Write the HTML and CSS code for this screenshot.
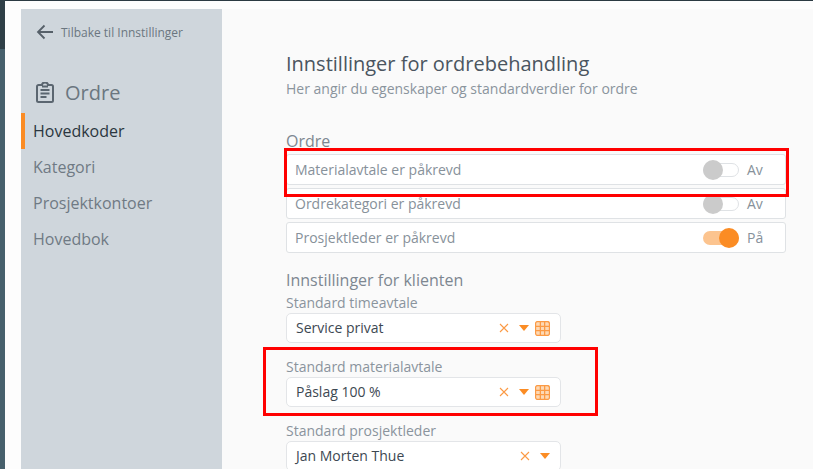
FILE: index.html
```html
<!DOCTYPE html>
<html lang="nb">
<head>
<meta charset="UTF-8">
<meta name="viewport" content="width=device-width, initial-scale=1.0">
<title>Innstillinger for ordrebehandling</title>
<link rel="stylesheet" href="styles.css">
</head>
<body>
  <div class="rail"><div class="rail-top"></div></div>
  <div class="page">
    <nav class="sidebar">
      <a class="back">
        <svg class="back-icon" width="18" height="16" viewBox="0 0 18 16"><path d="M17 8H2M8.500 1.500 2 8l6.500 6.500" fill="none" stroke="#566069" stroke-width="1.800"/></svg>
        Tilbake til Innstillinger
      </a>
      <div class="side-title">
        <svg width="18" height="21" viewBox="0 0 18 21"><path d="M2.500 3H6a3 2.500 0 0 1 6 0h3.500A1.500 1.500 0 0 1 17 4.500v14a1.500 1.500 0 0 1-1.500 1.500h-13A1.500 1.500 0 0 1 1 18.500v-14A1.500 1.500 0 0 1 2.500 3Z" fill="none" stroke="#5b6670" stroke-width="2"/><path d="M4.500 8h9M4.500 11.500h9M4.500 15h6M6 4.500h6" stroke="#5b6670" stroke-width="1.800"/></svg>
        <span>Ordre</span>
      </div>
      <ul class="side-menu">
        <li class="active">Hovedkoder</li>
        <li>Kategori</li>
        <li>Prosjektkontoer</li>
        <li>Hovedbok</li>
      </ul>
    </nav>
    <main class="content">
      <h1>Innstillinger for ordrebehandling</h1>
      <p class="lead">Her angir du egenskaper og standardverdier for ordre</p>

      <h2 class="section-order">Ordre</h2>
      <div class="rows">
        <div class="row"><span class="row-label">Materialavtale er påkrevd</span><span class="switch"><i></i></span><span class="state">Av</span></div>
        <div class="row"><span class="row-label">Ordrekategori er påkrevd</span><span class="switch"><i></i></span><span class="state">Av</span></div>
        <div class="row"><span class="row-label">Prosjektleder er påkrevd</span><span class="switch on"><i></i></span><span class="state">På</span></div>
      </div>

      <h2 class="section-client">Innstillinger for klienten</h2>
      <div class="field">
        <label>Standard timeavtale</label>
        <div class="select">
          <span class="value">Service privat</span>
          <svg class="clear" viewBox="0 0 10 10"><path d="M1 1l8 8M9 1l-8 8"/></svg>
          <span class="caret"></span>
          <svg class="grid" viewBox="0 0 14 14"><rect x="0.500" y="0.500" width="13" height="13" rx="2"/><path d="M0 5h14M0 9h14M5 0v14M9 0v14"/></svg>
        </div>
      </div>
      <div class="field">
        <label>Standard materialavtale</label>
        <div class="select">
          <span class="value">Påslag 100 %</span>
          <svg class="clear" viewBox="0 0 10 10"><path d="M1 1l8 8M9 1l-8 8"/></svg>
          <span class="caret"></span>
          <svg class="grid" viewBox="0 0 14 14"><rect x="0.500" y="0.500" width="13" height="13" rx="2"/><path d="M0 5h14M0 9h14M5 0v14M9 0v14"/></svg>
        </div>
      </div>
      <div class="field">
        <label>Standard prosjektleder</label>
        <div class="select">
          <span class="value">Jan Morten Thue</span>
          <svg class="clear" viewBox="0 0 10 10"><path d="M1 1l8 8M9 1l-8 8"/></svg>
          <span class="caret"></span>
        </div>
      </div>
    </main>
  </div>
  <div class="mark mark-row"></div>
  <div class="mark mark-field"></div>
</body>
</html>
```

FILE: styles.css
```css
html, body {
  height: 100%;
}
body {
  display: flex;
  height: 469px;
  margin: 0;
  overflow: hidden;
  font-family: "Open Sans", sans-serif;
  background-color: #fafafa;
  color: #333;
}
.rail {
  flex: none;
  width: 5px;
  background-color: #47606c;
}
.rail-top {
  height: 49px;
  background-color: #2f3f47;
}
.page {
  flex: 1;
  display: flex;
  border-top: 1px solid #2b3a42;
  padding-top: 8px;
  padding-left: 16px;
  background-color: #fdfdfd;
}
.sidebar {
  flex: none;
  width: 201px;
  background-color: #cfd6dc;
  overflow: hidden;
}
.back {
  display: flex;
  align-items: center;
  gap: 7px;
  height: 16px;
  margin: 15px 0 0 15px;
  font-size: 12px;
  color: #6b7680;
}
.side-title {
  display: flex;
  align-items: center;
  gap: 11px;
  margin: 37px 0 0 15px;
  height: 30px;
  font-size: 20px;
  color: #6b7680;
}
.side-menu {
  list-style: none;
  margin: 6px 0 0;
  padding: 0;
}
.side-menu li {
  height: 36px;
  line-height: 36px;
  padding-left: 12px;
  font-size: 16px;
  color: #6f7a84;
}
.side-menu li.active {
  padding-left: 8px;
  border-left: 4px solid #fb8c24;
  color: #2b3640;
}
.content {
  flex: 1;
  padding: 0 27px 0 64px;
  background-color: #fafafa;
}
h1 {
  margin: 40px 0 0;
  font-size: 20px;
  line-height: 30px;
  font-weight: 400;
  color: #4a5560;
}
.lead {
  margin: 1px 0 0;
  font-size: 14px;
  line-height: 18px;
  color: #8a949d;
}
h2 {
  margin: 0;
  font-size: 16px;
  line-height: 20px;
  font-weight: 400;
  color: #7d8791;
}
.section-order {
  margin-top: 33px;
}
.rows {
  display: flex;
  flex-direction: column;
  gap: 3px;
  margin-top: 3px;
}
.row {
  display: flex;
  align-items: center;
  height: 31px;
  padding: 0 22px 0 8px;
  background-color: #fff;
  border: 1px solid #dfe2e5;
  border-radius: 3px;
  box-sizing: border-box;
}
.row-label {
  flex: 1;
  font-size: 14px;
  color: #87919a;
}
.switch {
  position: relative;
  width: 36px;
  height: 14px;
  box-sizing: border-box;
  border: 1px solid #dfe2e5;
  border-radius: 7px;
  background-color: #fff;
}
.switch i {
  position: absolute;
  top: -4px;
  left: -1px;
  width: 20px;
  height: 20px;
  border-radius: 50%;
  background-color: #cbcbcb;
}
.switch.on {
  border: none;
  background-color: #fcc48f;
}
.switch.on i {
  top: -3px;
  left: 16px;
  background-color: #fb8c24;
}
.state {
  width: 16px;
  margin-left: 8px;
  font-size: 14px;
  color: #87919a;
}
.section-client {
  margin-top: 17px;
}
.field {
  width: 275px;
  margin-bottom: 14px;
}
.section-client + .field {
  margin-top: 3px;
}
.field label {
  display: block;
  font-size: 14px;
  line-height: 19px;
  color: #8a949d;
}
.select {
  display: flex;
  align-items: center;
  height: 30px;
  margin-top: 1px;
  padding: 0 10px 0 9px;
  box-sizing: border-box;
  background-color: #fff;
  border: 1px solid #e3e5e8;
  border-radius: 5px;
}
.value {
  flex: 1;
  margin-bottom: 2px;
  font-size: 14px;
  color: #3d4852;
}
.clear {
  width: 10px;
  height: 10px;
  fill: none;
  stroke: #fb9a45;
  stroke-width: 1.100;
}
.caret {
  width: 0;
  height: 0;
  margin-left: 10px;
  border-left: 5px solid transparent;
  border-right: 5px solid transparent;
  border-top: 6px solid #fb8c24;
}
.grid {
  width: 15px;
  height: 15px;
  margin-left: 6px;
  fill: #fdd9b5;
  stroke: #fb9a45;
  stroke-width: 1.200;
}
/* red annotation boxes drawn over the screenshot */
.mark {
  position: absolute;
  box-sizing: border-box;
  border: 3px solid #f00;
}
.mark-row {
  left: 284px;
  top: 148px;
  width: 505px;
  height: 49px;
}
.mark-field {
  left: 263px;
  top: 347px;
  width: 335px;
  height: 69px;
}
```
